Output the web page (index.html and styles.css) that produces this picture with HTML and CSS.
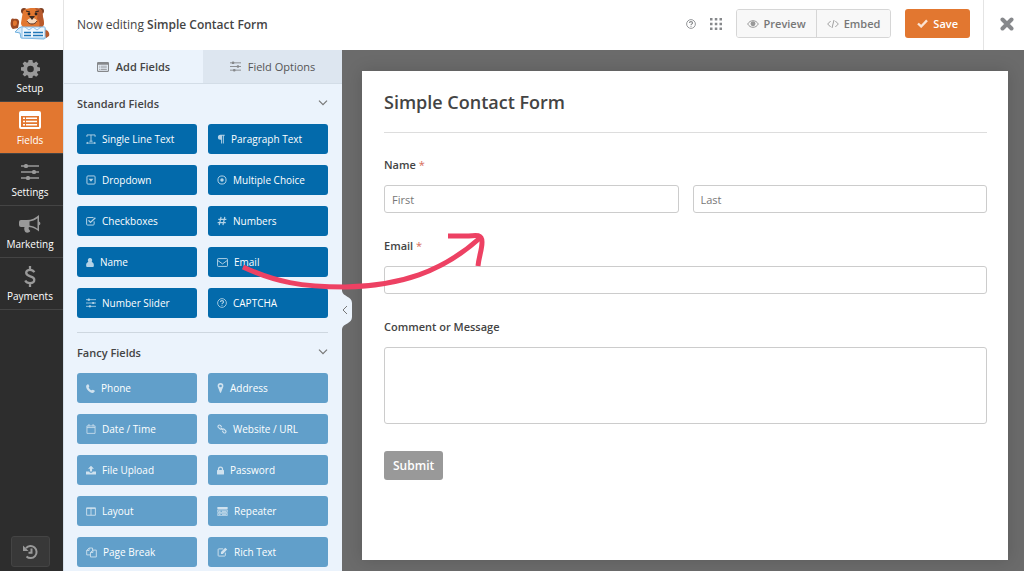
FILE: index.html
```
<!DOCTYPE html>
<html lang="en">
<head>
  <meta charset="UTF-8">
  <meta name="viewport" content="width=device-width, initial-scale=1.0">
  <title>Simple Contact Form</title>
  <link rel="stylesheet" href="styles.css">
</head>
<body>

  <!-- Icon set -->
  <svg class="sprite" aria-hidden="true">
    <symbol id="i-gear" viewBox="0 0 20 20">
      <path fill="currentColor" fill-rule="evenodd" d="M8 1h4l.5 2.6 1.3.6L16 2.700l2.300 2.300-1.500 2.200.6 1.300 2.600.5v3.500l-2.600.5-.6 1.300 1.500 2.200-2.300 2.300-2.200-1.500-1.300.6L12 20H8l-.5-2.500-1.300-.6L4 18.500l-2.300-2.300 1.500-2.200-.6-1.300L0 12.200V8.800l2.600-.5.6-1.300L1.700 4.800 4 2.500 6.200 4l1.300-.6zM10 7a3.400 3.400 0 1 0 0 7 3.400 3.400 0 0 0 0-7z"/>
    </symbol>
    <symbol id="i-list" viewBox="0 0 22 18">
      <path fill="currentColor" fill-rule="evenodd" d="M2 0h18a2 2 0 0 1 2 2v14a2 2 0 0 1-2 2H2a2 2 0 0 1-2-2V2a2 2 0 0 1 2-2zM2 5v11h18V5zM4 6.500h2V8H4zM7 6.500h11V8H7zM4 9.700h2v1.500H4zM7 9.700h11v1.500H7zM4 13h2v1.500H4zM7 13h11v1.500H7z"/>
    </symbol>
    <symbol id="i-sliders" viewBox="0 0 18 18">
      <path fill="none" stroke="currentColor" stroke-width="1.500" d="M0 3h18M0 9h18M0 15h18"/>
      <rect x="3" y="1" width="4" height="4" rx="1.500" fill="currentColor"/>
      <rect x="11" y="7" width="4" height="4" rx="1.500" fill="currentColor"/>
      <rect x="5" y="13" width="4" height="4" rx="1.500" fill="currentColor"/>
    </symbol>
    <symbol id="i-horn" viewBox="0 0 22 19">
      <path fill="currentColor" fill-rule="evenodd" d="M20 0v6.500a2 2 0 0 1 0 3.800V16.500c-3-2.500-6-4-10-4.400-1 1.400 0 2.400 1.300 4-.8 1.700-3.800 2-5 1C5.500 15.500 4.800 14 5.500 12H2a2 2 0 0 1-2-2V7a2 2 0 0 1 2-2h6c4.500 0 8.500-2 12-5zM18.500 3.200C16 5 13.500 6 10.500 6.400v4.200c3 .4 5.500 1.400 8 3.200z"/>
    </symbol>
    <symbol id="i-dollar" viewBox="0 0 12 22">
      <path fill="none" stroke="currentColor" stroke-width="2.400" d="M10.500 6.500C9.500 4.500 8 4 6 4 3.500 4 2 5.300 2 7.200c0 4.800 8.500 2.500 8.500 7.300 0 2-1.600 3.500-4.500 3.500-2.300 0-4-.9-5-2.800M6 0v4M6 18v4"/>
    </symbol>
    <symbol id="i-history" viewBox="0 0 16 16">
      <path fill="none" stroke="currentColor" stroke-width="2" d="M3 4.200A6 6 0 1 1 3.500 12.500M8.500 4.500v4.200H5.500"/>
      <path fill="currentColor" d="M0 1.500V7h5.500z"/>
    </symbol>
    <symbol id="i-help" viewBox="0 0 16 16">
      <circle cx="8" cy="8" r="7" fill="none" stroke="currentColor" stroke-width="1.400"/>
      <path fill="none" stroke="currentColor" stroke-width="1.700" d="M5.500 6.500C5.600 4.800 6.600 4.200 8 4.200s2.500.7 2.500 2C10.500 7.700 8 7.800 8 9.700M8 10.700v1.800"/>
    </symbol>
    <symbol id="i-grid" viewBox="0 0 12 12">
      <path fill="currentColor" d="M0 0h2.500v2.500H0zM4.800 0h2.500v2.500H4.800zM9.500 0H12v2.500H9.500zM0 4.800h2.500v2.500H0zM4.800 4.800h2.500v2.500H4.800zM9.500 4.800H12v2.500H9.500zM0 9.500h2.500V12H0zM4.800 9.500h2.500V12H4.800zM9.500 9.500H12V12H9.500z"/>
    </symbol>
    <symbol id="i-eye" viewBox="0 0 18 12">
      <path fill="none" stroke="currentColor" stroke-width="1.500" d="M1 6c2-3.300 4.700-5 8-5s6 1.700 8 5c-2 3.300-4.700 5-8 5S3 9.300 1 6z"/>
      <circle cx="9" cy="5.500" r="3.700" fill="currentColor"/>
    </symbol>
    <symbol id="i-code" viewBox="0 0 18 12">
      <path fill="none" stroke="currentColor" stroke-width="1.400" d="M5.500 1.500 1 6l4.500 4.500M12.500 1.500 17 6l-4.500 4.500M10.500 0l-3 12"/>
    </symbol>
    <symbol id="i-check" viewBox="0 0 12 10">
      <path fill="none" stroke="currentColor" stroke-width="2.600" d="M1 5l3.500 3.300L11 1.500"/>
    </symbol>
    <symbol id="i-close" viewBox="0 0 14 14">
      <path fill="none" stroke="currentColor" stroke-width="4" stroke-linecap="round" d="M2.500 2.500l9 9M11.500 2.500l-9 9"/>
    </symbol>
    <symbol id="i-down" viewBox="0 0 10 6">
      <path fill="none" stroke="currentColor" stroke-width="1.200" d="M1 .7l4 4 4-4"/>
    </symbol>
    <symbol id="i-text" viewBox="0 0 16 16">
      <path fill="none" stroke="currentColor" stroke-width="1.500" d="M1.500 4.500v-3h13v3M8 1.500v10M5.500 11.500h5M1 14.500h14M3 13l-2 1.500L3 16M13 13l2 1.500L13 16"/>
    </symbol>
    <symbol id="i-para" viewBox="0 0 12 16">
      <path fill="currentColor" d="M5 1h7v1.600h-1.500V15H9V2.600H7.700V15H6.200V9H5a4 4 0 0 1 0-8z"/>
    </symbol>
    <symbol id="i-dropdown" viewBox="0 0 16 16">
      <rect x="1.500" y="1.500" width="13" height="13" rx="1.500" fill="none" stroke="currentColor" stroke-width="1.600"/>
      <path fill="currentColor" d="M4 6h8l-4 4.700z"/>
    </symbol>
    <symbol id="i-radio" viewBox="0 0 16 16">
      <circle cx="8" cy="8" r="6.500" fill="none" stroke="currentColor" stroke-width="1.600"/>
      <circle cx="8" cy="8" r="2.800" fill="currentColor"/>
    </symbol>
    <symbol id="i-checkbox" viewBox="0 0 16 16">
      <path fill="none" stroke="currentColor" stroke-width="1.600" d="M13 8.500v4.500a1.500 1.500 0 0 1-1.500 1.500H2.500A1.500 1.500 0 0 1 1 13V4a1.500 1.500 0 0 1 1.500-1.500H12"/>
      <path fill="none" stroke="currentColor" stroke-width="2.200" d="M4 7l3.200 3.200L15 2.700"/>
    </symbol>
    <symbol id="i-hash" viewBox="0 0 16 16">
      <path fill="none" stroke="currentColor" stroke-width="1.900" d="M6.500 1.500l-3 13M12.500 1.500l-3 13M2 5.500h13M1 10.500h13"/>
    </symbol>
    <symbol id="i-user" viewBox="0 0 12 14">
      <path fill="currentColor" d="M6 0a3.300 3.300 0 0 1 2.500 5.500L10 7c1.500.7 2 2 2 4.500 0 1.700-.8 2.500-2 2.500H2c-1.200 0-2-.8-2-2.500C0 9 .5 7.700 2 7l1.500-1.500A3.300 3.300 0 0 1 6 0z"/>
    </symbol>
    <symbol id="i-mail" viewBox="0 0 16 13">
      <rect x=".8" y=".8" width="14.400" height="11.400" rx="1" fill="none" stroke="currentColor" stroke-width="1.400"/>
      <path fill="none" stroke="currentColor" stroke-width="1.400" d="M1 3.500l7 5 7-5"/>
    </symbol>
    <symbol id="i-phone" viewBox="0 0 14 14">
      <path fill="currentColor" d="M1 1.500C2 .5 3.300 0 3.800.7l1.400 2.600c.3.700-1 1.400-1 2 .5 1.700 2.800 4 4.500 4.500.6 0 1.300-1.300 2-1l2.600 1.400c.7.500.2 1.800-.8 2.800-2.500 2-6.500 0-9-2.500S-1 4 1 1.500z"/>
    </symbol>
    <symbol id="i-pin" viewBox="0 0 10 16">
      <path fill="currentColor" fill-rule="evenodd" d="M5 0a4.600 4.600 0 0 1 4.600 4.700c0 1.300-.4 2-1 3.300L5.700 15.400H4.300L1.400 8c-.6-1.300-1-2-1-3.300A4.600 4.600 0 0 1 5 0zM5 2.600a2.100 2.100 0 1 0 0 4.300 2.100 2.100 0 0 0 0-4.300z"/>
    </symbol>
    <symbol id="i-calendar" viewBox="0 0 16 16">
      <path fill="none" stroke="currentColor" stroke-width="1.300" d="M1.500 3h13v12h-13zM1.500 5.700h13M4.700 0v4M11.300 0v4"/>
    </symbol>
    <symbol id="i-link" viewBox="0 0 16 16">
      <path fill="none" stroke="currentColor" stroke-width="1.800" d="M7.500 4.500 5.300 2.200a2.200 2.200 0 0 0-3.100 3.100l2.500 2.500c1 .9 2.200.9 3 0M8.500 11.500l2.200 2.300a2.200 2.200 0 0 0 3.100-3.100l-2.500-2.500c-1-.9-2.200-.9-3 0M5.800 5.800l4.400 4.400"/>
    </symbol>
    <symbol id="i-upload" viewBox="0 0 16 16">
      <path fill="currentColor" d="M8 1l4.800 5H9.700v4.500H6.300V6H3.200zM0 10.500h5c.4 1.500 1.500 2 3 2s2.600-.5 3-2h5V15H0z"/>
    </symbol>
    <symbol id="i-lock" viewBox="0 0 12 14">
      <path fill="currentColor" fill-rule="evenodd" d="M1.500 6V4.500a4.500 4.500 0 0 1 9 0V6H11a1 1 0 0 1 1 1v6a1 1 0 0 1-1 1H1a1 1 0 0 1-1-1V7a1 1 0 0 1 1-1zM3.700 6h4.600V4.500a2.300 2.300 0 0 0-4.600 0z"/>
    </symbol>
    <symbol id="i-columns" viewBox="0 0 16 14">
      <path fill="none" stroke="currentColor" stroke-width="1.400" d="M1 1h14v12H1zM8 1v12M1 2.200h14"/>
    </symbol>
    <symbol id="i-repeat" viewBox="0 0 16 14">
      <path fill="none" stroke="currentColor" stroke-width="1.200" d="M.6 4.600h14.800v3.800H.6zM.6 9.800h14.800v3.600H.6z"/>
      <path fill="currentColor" d="M0 0h16v3.500H0zM2 6h3v1.200H2zM7 6h7v1.200H7zM2 11h3v1.200H2zM7 11h7v1.200H7z"/>
    </symbol>
    <symbol id="i-copy" viewBox="0 0 16 16">
      <path fill="none" stroke="currentColor" stroke-width="1.300" d="M6 11.500H1V5l3.500-3.500H9.500v3M4.500 1.500V5H1M6.500 8 10 4.500h5v10H6.500zM10 4.500V8H6.500"/>
    </symbol>
    <symbol id="i-edit" viewBox="0 0 16 16">
      <path fill="none" stroke="currentColor" stroke-width="1.500" d="M12.500 9v4.500a1 1 0 0 1-1 1H2a1 1 0 0 1-1-1V4a1 1 0 0 1 1-1h7"/>
      <path fill="currentColor" d="M12.500 1L15.500 4 8.500 11H5.500V8z"/>
    </symbol>
  </svg>

  <!-- Toolbar -->
  <header class="toolbar">
    <a href="#" class="logo" aria-label="Home">
      <svg width="40" height="34" viewBox="0 0 40 34">
        <path d="M9 21c4-2 7-3 10-3h8c4 0 7 1 9 5l2 6-4 3-23-1-1-5-5-1z" fill="#d8ebfa" stroke="#6fb1e0"/>
        <path d="M1 14c0-2 1-3 3-2 2-1 6 0 5 4l-1 5-5 1c-2-1-3-5-2-8z" fill="#9c4a24"/>
        <path d="M3 15c1-2 4-2 4 1s-3 4-4 2z" fill="#e27730"/>
        <path d="M35 23c3 0 5 3 4 6l-3 2-2-4z" fill="#b85a2d"/>
        <circle cx="14" cy="4" r="3" fill="#7e3f22"/>
        <circle cx="31" cy="4" r="3" fill="#7e3f22"/>
        <path d="M13 4c3-3 7-3 10-3s7 0 9 3l2 12c0 4-4 6-11 6s-12-2-12-6z" fill="#e27730"/>
        <path d="M25 1c4 0 6 1 7 3l2 12c0 3-3 5-6 5 3-3 1-8-1-9 1-4 0-8-2-11z" fill="#b85a2d"/>
        <ellipse cx="22" cy="14" rx="5" ry="3" fill="#f6d9be"/>
        <path d="M19 9h6l-3 4z" fill="#3c2a22"/>
        <path d="M17 14c2 4 8 4 10 0" fill="none" stroke="#5e3322"/>
        <circle cx="19" cy="7" r="1.400" fill="#2d2420"/>
        <circle cx="26" cy="7" r="1.400" fill="#2d2420"/>
        <path d="M16 4l4 1M29 4l-4 1" stroke="#2d2420"/>
        <path d="M12 20h23v11H12z" fill="#eff7fe" stroke="#8fc1e8"/>
        <path d="M15 20l4 3 4-3 4 3 4-3" fill="none" stroke="#8fc1e8"/>
        <path d="M14 25.500h7M23 25.500h10M14 28.500h7M23 28.500h10" stroke="#1f76b8" stroke-width="1.600"/>
      </svg>
    </a>
    <p class="form-name">Now editing <strong>Simple Contact Form</strong></p>
    <div class="actions">
      <button class="icon-btn" aria-label="Help"><svg width="10" height="10"><use href="#i-help"/></svg></button>
      <button class="icon-btn" aria-label="Apps"><svg width="12" height="12"><use href="#i-grid"/></svg></button>
      <div class="btn-group">
        <button class="btn"><svg width="12" height="8"><use href="#i-eye"/></svg>Preview</button>
        <button class="btn"><svg width="12" height="8"><use href="#i-code"/></svg>Embed</button>
      </div>
      <button class="btn btn-save"><svg width="11" height="9"><use href="#i-check"/></svg>Save</button>
    </div>
    <button class="close" aria-label="Close"><svg width="14" height="14"><use href="#i-close"/></svg></button>
  </header>

  <div class="builder">
    <!-- Sidebar -->
    <nav class="sidebar">
      <a href="#"><svg width="19" height="19"><use href="#i-gear"/></svg>Setup</a>
      <a href="#" class="active"><svg width="22" height="18"><use href="#i-list"/></svg>Fields</a>
      <a href="#"><svg width="18" height="18"><use href="#i-sliders"/></svg>Settings</a>
      <a href="#"><svg width="22" height="19"><use href="#i-horn"/></svg>Marketing</a>
      <a href="#"><svg width="12" height="21"><use href="#i-dollar"/></svg>Payments</a>
      <button class="history" aria-label="Revisions"><svg width="16" height="16"><use href="#i-history"/></svg></button>
    </nav>

    <!-- Fields panel -->
    <aside class="panel">
      <div class="tabs">
        <button class="tab active"><svg width="12" height="10"><use href="#i-list"/></svg>Add Fields</button>
        <button class="tab"><svg width="11" height="11"><use href="#i-sliders"/></svg>Field Options</button>
      </div>
      <section class="group">
        <h2>Standard Fields <svg width="10" height="6"><use href="#i-down"/></svg></h2>
        <div class="fields">
          <button><svg width="10" height="10"><use href="#i-text"/></svg>Single Line Text</button>
          <button><svg width="8" height="10"><use href="#i-para"/></svg>Paragraph Text</button>
          <button><svg width="10" height="10"><use href="#i-dropdown"/></svg>Dropdown</button>
          <button><svg width="10" height="10"><use href="#i-radio"/></svg>Multiple Choice</button>
          <button><svg width="10" height="10"><use href="#i-checkbox"/></svg>Checkboxes</button>
          <button><svg width="10" height="10"><use href="#i-hash"/></svg>Numbers</button>
          <button><svg width="8" height="9"><use href="#i-user"/></svg>Name</button>
          <button><svg width="11" height="9"><use href="#i-mail"/></svg>Email</button>
          <button><svg width="10" height="10"><use href="#i-sliders"/></svg>Number Slider</button>
          <button><svg width="10" height="10"><use href="#i-help"/></svg>CAPTCHA</button>
        </div>
      </section>
      <section class="group fancy">
        <h2>Fancy Fields <svg width="10" height="6"><use href="#i-down"/></svg></h2>
        <div class="fields">
          <button><svg width="9" height="9"><use href="#i-phone"/></svg>Phone</button>
          <button><svg width="7" height="10"><use href="#i-pin"/></svg>Address</button>
          <button><svg width="10" height="10"><use href="#i-calendar"/></svg>Date / Time</button>
          <button><svg width="10" height="10"><use href="#i-link"/></svg>Website / URL</button>
          <button><svg width="10" height="10"><use href="#i-upload"/></svg>File Upload</button>
          <button><svg width="7" height="9"><use href="#i-lock"/></svg>Password</button>
          <button><svg width="10" height="9"><use href="#i-columns"/></svg>Layout</button>
          <button><svg width="11" height="9"><use href="#i-repeat"/></svg>Repeater</button>
          <button><svg width="11" height="11"><use href="#i-copy"/></svg>Page Break</button>
          <button><svg width="11" height="10"><use href="#i-edit"/></svg>Rich Text</button>
        </div>
      </section>
    </aside>

    <!-- Form preview -->
    <main class="preview">
      <button class="collapse" aria-label="Collapse panel">
        <svg width="11" height="38" viewBox="0 0 11 38">
          <path d="M0 0c1 6 10 5 10 12v14c0 7-9 6-10 12z" fill="#ebf3fc"/>
          <path d="M5 15l-4 4 4 4" fill="none" stroke="#777" stroke-width="1"/>
        </svg>
      </button>
      <form class="form">
        <h1>Simple Contact Form</h1>
        <div class="field">
          <label for="first">Name <span>*</span></label>
          <div class="row">
            <input type="text" id="first" placeholder="First">
            <input type="text" id="last" placeholder="Last" aria-label="Last name">
          </div>
        </div>
        <div class="field">
          <label for="email">Email <span>*</span></label>
          <input type="email" id="email">
        </div>
        <div class="field">
          <label for="message">Comment or Message</label>
          <textarea id="message"></textarea>
        </div>
        <button type="button" class="submit">Submit</button>
      </form>
    </main>
  </div>

  <!-- Drag hint arrow -->
  <svg class="arrow" width="250" height="70" viewBox="0 0 250 70" aria-hidden="true">
    <path d="M3 36C35 51 62 56 105 56C160 55 202 41 240 7" fill="none" stroke="#ed4163" stroke-width="5"/>
    <path d="M208 5h20c8-1 14-2 14 6 0 8-3 14-4 24" fill="none" stroke="#ed4163" stroke-width="5"/>
  </svg>

</body>
</html>
```
FILE: styles.css
```
* {
  margin: 0;
  padding: 0;
  box-sizing: border-box;
}

body {
  display: flex;
  flex-direction: column;
  height: 100vh;
  overflow: hidden;
  font-family: "Open Sans", "Noto Sans", sans-serif;
  font-size: 10px;
  color: #444;
}

button,
input,
textarea {
  font-family: inherit;
  font-size: inherit;
}

button {
  border: none;
  cursor: pointer;
}

a {
  text-decoration: none;
}

svg {
  flex-shrink: 0;
}

.sprite {
  position: absolute;
  width: 0;
  height: 0;
}

/* Toolbar */
.toolbar {
  display: flex;
  align-items: center;
  flex-shrink: 0;
  height: 50px;
  background-color: #fff;
}

.logo {
  display: flex;
  align-items: center;
  justify-content: center;
  width: 64px;
  height: 100%;
  padding: 0 4px 2px 0;
  border-right: 1px solid #e4e4e4;
}

.form-name {
  padding: 0 0 2px 13px;
  font-size: 12px;
}

.form-name strong {
  font-weight: 600;
}

.actions {
  display: flex;
  align-items: center;
  gap: 14px;
  margin-left: auto;
  padding-bottom: 3px;
}

.icon-btn {
  display: flex;
  background: none;
  color: #86888b;
}

.btn-group {
  display: flex;
  border: 1px solid #d6d6d6;
  border-radius: 3px;
  overflow: hidden;
}

.btn {
  display: flex;
  align-items: center;
  gap: 5px;
  height: 27px;
  padding: 0 10px;
  background-color: #f8f8f8;
  color: #777;
  font-size: 11px;
  font-weight: 600;
}

.btn svg {
  color: #999;
}

.btn + .btn {
  border-left: 1px solid #d6d6d6;
}

.btn-save {
  height: 29px;
  padding: 0 12px;
  border-radius: 3px;
  background-color: #e27730;
  color: #fff;
}

.btn-save svg {
  color: #fbe3d2;
}

.close {
  display: flex;
  align-items: center;
  justify-content: center;
  width: 41px;
  height: 100%;
  margin-left: 13px;
  padding: 0 0 2px 5px;
  border-left: 1px solid #e4e4e4;
  background: none;
  color: #86888b;
}

/* Layout */
.builder {
  display: flex;
  flex: 1;
  min-height: 0;
}

/* Sidebar */
.sidebar {
  display: flex;
  flex-direction: column;
  width: 63px;
  padding-bottom: 4px;
  background-color: #2d2d2d;
}

.sidebar a {
  display: grid;
  grid-template-rows: 22px 14px;
  gap: 2px;
  place-items: center;
  height: 52px;
  padding: 7px 3px 7px 0;
  border-bottom: 1px solid #444;
  color: #fff;
  font-size: 10px;
  line-height: 14px;
}

.sidebar svg {
  color: #999;
}

.sidebar a.active {
  background-color: #e27730;
}

.sidebar a.active svg {
  color: #fff;
}

.history {
  display: flex;
  align-items: center;
  justify-content: center;
  width: 39px;
  height: 31px;
  margin: auto 13px 0 11px;
  border: 1px solid #444;
  border-radius: 3px;
  background-color: #383838;
}

/* Fields panel */
.panel {
  width: 279px;
  border-left: 1px solid #d5e0ea;
  background-color: #ebf3fc;
  overflow: hidden;
}

.tabs {
  display: grid;
  grid-template-columns: 1fr 1fr;
  height: 34px;
}

.tab {
  display: flex;
  align-items: center;
  justify-content: center;
  gap: 7px;
  border-bottom: 1px solid #d3dde7;
  background-color: #dde6f0;
  color: #555;
  font-size: 11px;
}

.tab.active {
  background-color: #ebf3fc;
  color: #444;
  font-weight: 600;
}

.tab svg {
  color: #86888b;
}

.group {
  margin: 0 14px 0 13px;
  padding-bottom: 14px;
}

.group + .group {
  border-top: 1px solid #ced7e0;
}

.group h2 {
  display: flex;
  align-items: center;
  justify-content: space-between;
  height: 40px;
  padding-bottom: 2px;
  font-size: 11px;
  font-weight: 600;
}

.group h2 svg {
  color: #777;
}

.fields {
  display: grid;
  grid-template-columns: 1fr 1fr;
  gap: 11px;
}

.fields button {
  display: flex;
  align-items: center;
  gap: 6px;
  height: 30px;
  padding: 0 9px;
  border-radius: 3px;
  background-color: #036aab;
  color: #fff;
  white-space: nowrap;
}

.fields svg {
  opacity: 0.7;
}

.fancy .fields button {
  background-color: #619fca;
}

/* Preview */
.preview {
  position: relative;
  flex: 1;
  padding: 21px 16px 11px 20px;
  background-color: #6b6b6b;
}

.collapse {
  position: absolute;
  top: 241px;
  left: 0;
  background: none;
}

.form {
  height: 100%;
  padding: 0 21px 0 22px;
  background-color: #fff;
  box-shadow: 0 0 16px rgba(0, 0, 0, 0.15);
}

.form h1 {
  height: 62px;
  margin-bottom: 23px;
  border-bottom: 1px solid #ddd;
  font-size: 18px;
  font-weight: 600;
  line-height: 62px;
}

.field {
  margin-bottom: 24px;
}

.field label {
  display: block;
  margin-bottom: 11px;
  font-size: 11px;
  font-weight: 600;
  line-height: 18px;
}

.field label span {
  color: #d66a5a;
  font-weight: 400;
}

.row {
  display: flex;
  gap: 14px;
}

.field input,
.field textarea {
  display: block;
  width: 100%;
  height: 28px;
  padding: 0 7px;
  border: 1px solid #ccc;
  border-radius: 3px;
  background-color: #fff;
  font-size: 11px;
}

.field textarea {
  height: 77px;
  resize: none;
}

.field input::placeholder {
  color: #777;
}

.submit {
  height: 29px;
  margin-top: 3px;
  padding: 0 9px;
  border-radius: 3px;
  background-color: #999;
  color: #fff;
  font-size: 12px;
  font-weight: 600;
}

.arrow {
  position: absolute;
  top: 231px;
  left: 240px;
  pointer-events: none;
}
```
